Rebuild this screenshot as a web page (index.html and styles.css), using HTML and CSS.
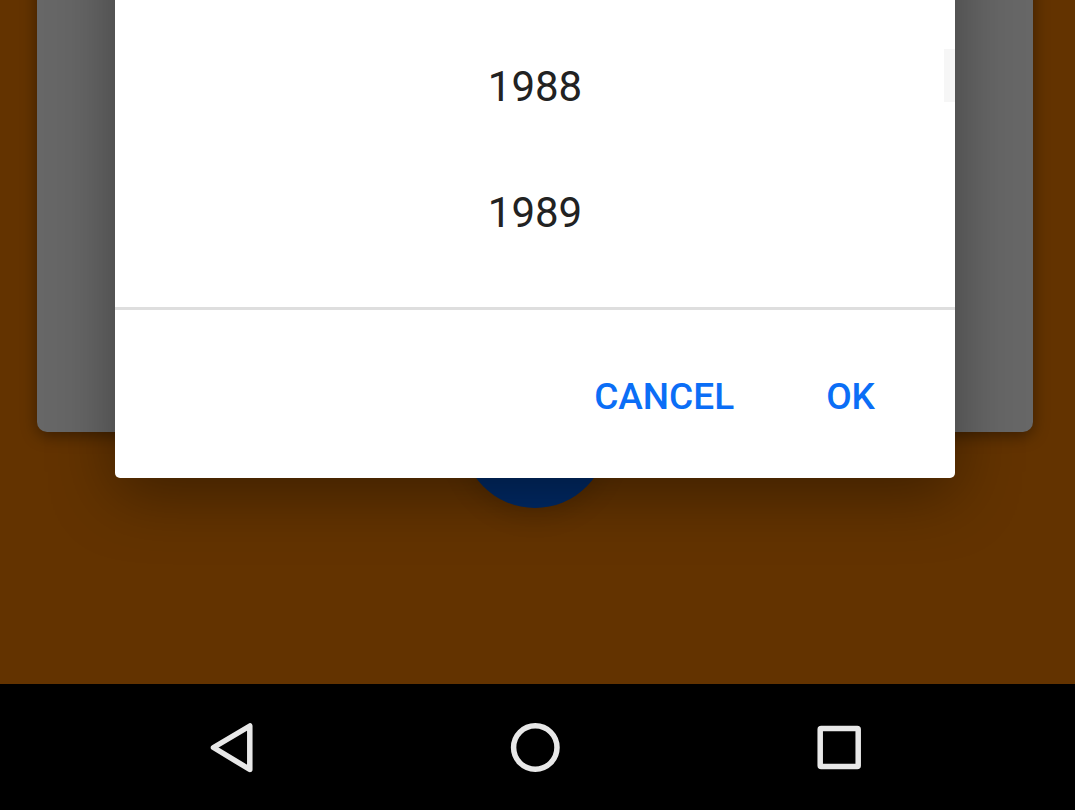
FILE: index.html
```
<!DOCTYPE html>
<html lang="en">
<head>
<meta charset="utf-8">
<meta name="viewport" content="width=device-width, initial-scale=1">
<title>Select year</title>
<link rel="stylesheet" href="styles.css">
</head>
<body>
<div class="screen">
  <main class="stage">
    <div class="page">
      <div class="card"></div>
      <div class="fab"></div>
    </div>
    <div class="overlay">
      <section class="dialog" role="dialog" aria-label="Select year">
        <ul class="years">
          <li><button class="year" type="button">1988</button></li>
          <li><button class="year" type="button">1989</button></li>
        </ul>
        <span class="scroll-thumb"></span>
        <div class="actions">
          <button class="action" type="button">CANCEL</button>
          <button class="action" type="button">OK</button>
        </div>
      </section>
    </div>
  </main>
  <nav class="navbar" aria-label="System">
    <button class="nav-button" type="button" aria-label="Back">
      <svg class="icon" viewBox="0 0 60 60"><path d="M12.5 30.5 48.8 9V52.500Z"/></svg>
    </button>
    <button class="nav-button" type="button" aria-label="Home">
      <svg class="icon" viewBox="0 0 60 60"><circle cx="30.300" cy="30.500" r="21.700"/></svg>
    </button>
    <button class="nav-button" type="button" aria-label="Recent apps">
      <svg class="icon" viewBox="0 0 60 60"><rect x="11.200" y="11.500" width="38" height="38" rx="1"/></svg>
    </button>
  </nav>
</div>
</body>
</html>
```
FILE: styles.css
```
* {
  box-sizing: border-box;
}

body {
  margin: 0;
  background: #000;
  font-family: Roboto, sans-serif;
}

button {
  padding: 0;
  border: 0;
  background: none;
  font-family: inherit;
}

.screen {
  display: flex;
  flex-direction: column;
  min-height: 100vh;
}

.stage {
  display: grid;
  flex: 1;
  overflow: hidden;
  background: #633300;
}

/* Both layers begin above the visible area, so their shadows run off the top edge. */
.page,
.overlay {
  grid-area: 1 / 1;
  margin-top: -100px;
}

.page {
  display: flex;
  flex-direction: column;
  align-items: center;
  padding: 0 42px 0 37px;
}

.card {
  width: 100%;
  height: 532px;
  border-radius: 10px;
  background: #676767;
  box-shadow: 0 4px 16px rgba(0, 0, 0, 0.4);
}

.fab {
  width: 146px;
  height: 146px;
  margin-top: -70px;
  border-radius: 50%;
  background: #002a66;
  box-shadow: 0 8px 24px rgba(0, 0, 0, 0.15);
}

.overlay {
  z-index: 1;
  padding: 0 120px 0 115px;
}

.dialog {
  position: relative;
  border-radius: 5px;
  background: #fff;
  box-shadow: 0 16px 64px rgba(0, 0, 0, 0.38);
}

.years {
  margin: 0;
  padding: 124px 0 31px;
  border-bottom: 3px solid #dedede;
  list-style: none;
}

.year {
  display: block;
  width: 100%;
  color: #222;
  font-size: 42px;
  line-height: 126px;
}

.scroll-thumb {
  position: absolute;
  top: 149px;
  right: 0;
  width: 11px;
  height: 53px;
  background: #f6f6f6;
}

.actions {
  display: flex;
  justify-content: flex-end;
  gap: 92px;
  padding: 45px 80px 39px;
}

.action {
  color: #0b6ef6;
  font-size: 37px;
  font-weight: 500;
  line-height: 84px;
}

.navbar {
  display: flex;
  justify-content: center;
  gap: 244px;
  padding: 33px 5px 33px 0;
  background: #000;
}

.nav-button {
  width: 60px;
  height: 60px;
}

.icon {
  display: block;
  width: 60px;
  height: 60px;
  fill: none;
  stroke: #e8e8e8;
  stroke-width: 5.5;
  stroke-linejoin: round;
}
```
